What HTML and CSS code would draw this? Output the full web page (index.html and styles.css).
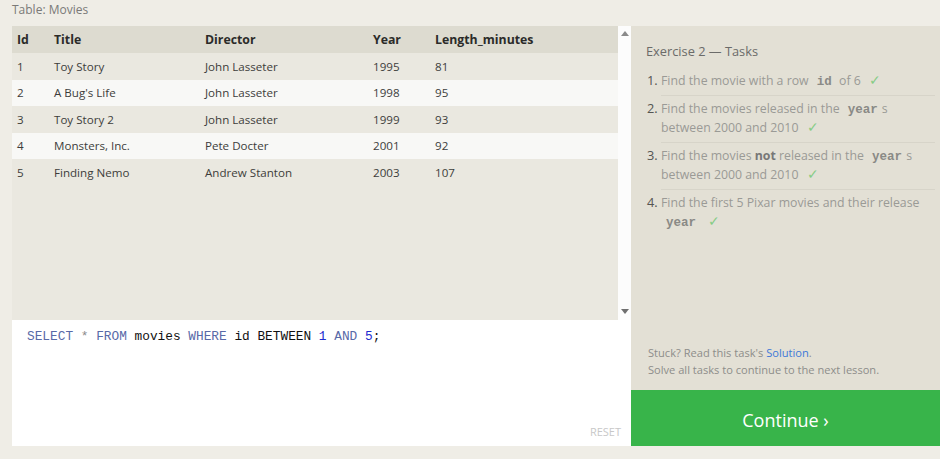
FILE: index.html
```html
<!DOCTYPE html>
<html>
<head>
<meta charset="utf-8">
<link rel="stylesheet" href="styles.css">
</head>
<body>
<div class="page">
  <div class="caption">Table: Movies</div>
  <div class="main">
    <div class="left">
      <div class="results">
        <div class="table-wrap">
          <table class="movies">
            <thead>
              <tr><th class="c-id">Id</th><th class="c-title">Title</th><th class="c-dir">Director</th><th class="c-year">Year</th><th>Length_minutes</th></tr>
            </thead>
            <tbody>
              <tr><td>1</td><td>Toy Story</td><td>John Lasseter</td><td>1995</td><td>81</td></tr>
              <tr class="even"><td>2</td><td>A Bug's Life</td><td>John Lasseter</td><td>1998</td><td>95</td></tr>
              <tr><td>3</td><td>Toy Story 2</td><td>John Lasseter</td><td>1999</td><td>93</td></tr>
              <tr class="even"><td>4</td><td>Monsters, Inc.</td><td>Pete Docter</td><td>2001</td><td>92</td></tr>
              <tr><td>5</td><td>Finding Nemo</td><td>Andrew Stanton</td><td>2003</td><td>107</td></tr>
            </tbody>
          </table>
        </div>
        <div class="scrollbar">
          <span class="arrow up"></span>
          <span class="arrow down"></span>
        </div>
      </div>
      <div class="editor">
        <div class="code"><span class="kw">SELECT</span> <span class="op">*</span> <span class="kw">FROM</span> movies <span class="kw">WHERE</span> id BETWEEN <span class="num">1</span> <span class="kw">AND</span> <span class="num">5</span>;</div>
        <div class="reset">RESET</div>
      </div>
    </div>
    <div class="right">
      <div class="tasks">
        <div class="tasks-title">Exercise 2 — Tasks</div>
        <ol class="task-list">
          <li>Find the movie with a row <code>id</code> of 6 <span class="check">✓</span></li>
          <li>Find the movies released in the <code>year</code>s between 2000 and 2010 <span class="check">✓</span></li>
          <li>Find the movies <b>not</b> released in the <code>year</code>s between 2000 and 2010 <span class="check">✓</span></li>
          <li>Find the first 5 Pixar movies and their release <code>year</code> <span class="check">✓</span></li>
        </ol>
        <div class="help">
          <div>Stuck? Read this task's <a class="link">Solution</a>.</div>
          <div>Solve all tasks to continue to the next lesson.</div>
        </div>
      </div>
      <div class="continue">Continue ›</div>
    </div>
  </div>
</div>
</body>
</html>
```
FILE: styles.css
```css
* { box-sizing: border-box; }
html, body { margin: 0; padding: 0; }
body {
  background: #efede6;
  font-family: "Open Sans", "Segoe UI", sans-serif;
  width: 940px;
  height: 459px;
  overflow: hidden;
}
.page { padding-left: 12px; }
.caption {
  height: 26px;
  font-size: 12px;
  color: #7a7a78;
  line-height: 20px;
}
.main { display: flex; }
.left { width: 619px; display: flex; flex-direction: column; }
.results { height: 294px; display: flex; background: #eae8e0; }
.table-wrap { width: 606px; }
.scrollbar {
  width: 13px;
  background: #fcfcfc;
  display: flex;
  flex-direction: column;
  justify-content: space-between;
  align-items: center;
  padding: 5px 0 6px;
}
.arrow { width: 0; height: 0; border-left: 4px solid transparent; border-right: 4px solid transparent; }
.arrow.up { border-bottom: 5px solid #8a8a8a; }
.arrow.down { border-top: 5px solid #6f6f6f; }
.movies { border-collapse: collapse; width: 606px; font-size: 11.6px; color: #3d3d3b; }
.movies th {
  background: #dddbd0;
  text-align: left;
  font-weight: 700;
  font-size: 12.3px;
  color: #2b2b29;
  height: 27px;
  padding: 0 0 0 5px;
}
.movies td { height: 26.5px; padding: 0 0 0 5px; }
.movies tr.even td { background: #f8f8f6; }
.c-id { width: 37px; }
.c-title { width: 151px; }
.c-dir { width: 168px; }
.c-year { width: 62px; }
.editor {
  height: 126px;
  background: #ffffff;
  position: relative;
  padding: 8px 0 0 15px;
}
.code {
  font-family: "Liberation Mono", "DejaVu Sans Mono", monospace;
  font-size: 12.8px;
  color: #111;
  line-height: 18px;
}
.kw { color: #5869a7; }
.op { color: #8b8b8b; }
.num { color: #1d2bd0; }
.reset {
  position: absolute;
  right: 10px;
  bottom: 7px;
  font-size: 11px;
  color: #c8c8c8;
}
.right { width: 309px; display: flex; flex-direction: column; }
.tasks {
  height: 364px;
  background: #e3e0d5;
  padding: 15px 5px 0 15px;
  display: flex;
  flex-direction: column;
}
.tasks-title { font-size: 12.8px; color: #6b6b69; line-height: 20px; }
.task-list {
  margin: 8px 0 0;
  padding: 0 0 0 15px;
  font-size: 12.3px;
  color: #9a9a96;
  line-height: 19px;
}
.task-list li { padding: 2px 0 5px; border-bottom: 1px solid #d7d4c9; }
.task-list li + li { padding-top: 3px; }
.task-list li:last-child { border-bottom: none; }
.task-list li::marker { color: #555553; font-size: 12.8px; }
.task-list code {
  font-family: "Liberation Mono", "DejaVu Sans Mono", monospace;
  font-weight: 700;
  color: #8a8a86;
  font-size: 12.5px;
  line-height: 1;
  padding: 0 4px 0 5px;
}
.task-list b { color: #777; }
.check { color: #86cc86; margin-left: 5px; font-size: 13.5px; line-height: 1; }
.help {
  margin-top: auto;
  padding-bottom: 12px;
  font-size: 11.1px;
  color: #8d8d8a;
  line-height: 17px;
  padding-left: 2px;
}
.link { color: #3d78d8; }
.continue {
  height: 56px;
  background: #38b44a;
  color: #fff;
  font-size: 18px;
  display: flex;
  align-items: center;
  justify-content: center;
  padding-top: 3px;
}
```
